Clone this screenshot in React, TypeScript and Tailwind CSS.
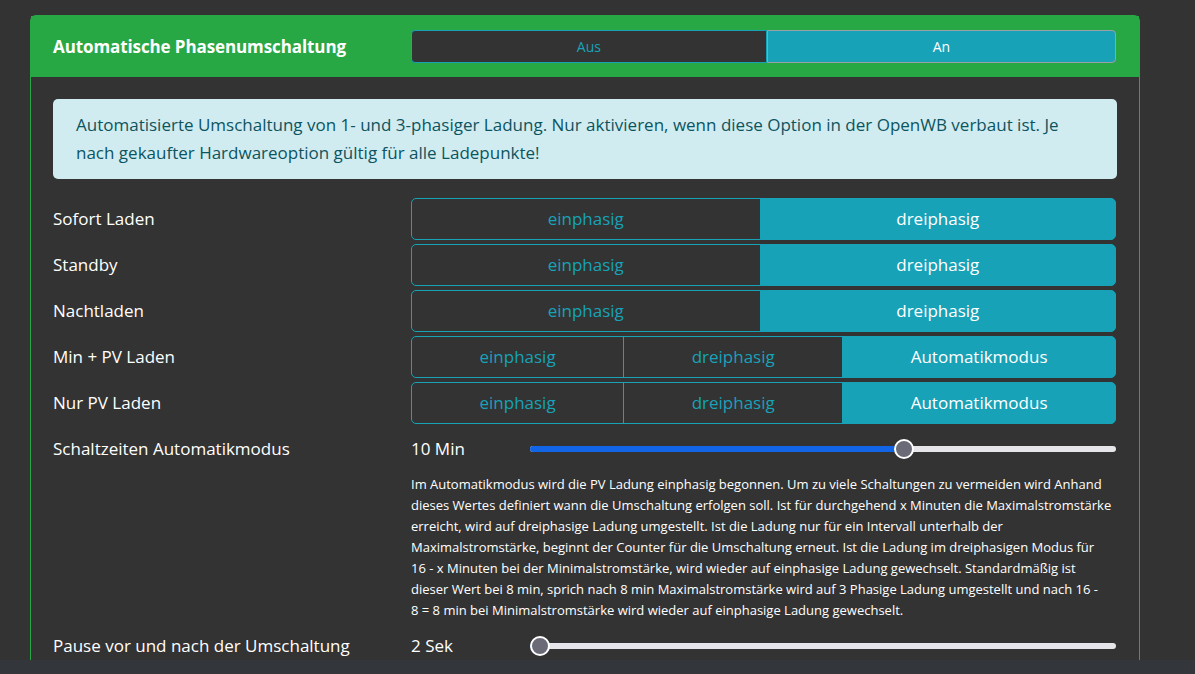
import React from "react";

type Opt = { label: string; active?: boolean };

function ButtonGroup({ opts }: { opts: Opt[] }) {
  return (
    <div className="flex h-[42px] w-[705px]">
      {opts.map((o, i) => {
        const first = i === 0;
        const last = i === opts.length - 1;
        return (
          <div
            key={i}
            className={
              "flex flex-auto items-center justify-center border border-[#17a2b8] text-[17px] " +
              (first ? "rounded-l-[5px] " : "-ml-px ") +
              (last ? "rounded-r-[5px] " : "") +
              (o.active ? "bg-[#17a2b8] text-white" : "bg-[#333333] text-[#17a2b8]")
            }
          >
            {o.label}
          </div>
        );
      })}
    </div>
  );
}

function Slider({ frac }: { frac: number }) {
  const left = 10 + frac * 566;
  return (
    <div className="relative h-[20px] w-[586px]">
      <div className="absolute left-0 right-0 top-[7px] h-[6px] rounded-full bg-[#e6e6ea]" />
      <div
        className="absolute left-0 top-[7px] h-[6px] rounded-full bg-[#1165e6]"
        style={{ width: left }}
      />
      <div
        className="absolute top-0 h-[20px] w-[20px] rounded-full border-2 border-white bg-[#6b6b78]"
        style={{ left: left - 10 }}
      />
    </div>
  );
}

const rows: { label: string; opts: Opt[] }[] = [
  { label: "Sofort Laden", opts: [{ label: "einphasig" }, { label: "dreiphasig", active: true }] },
  { label: "Standby", opts: [{ label: "einphasig" }, { label: "dreiphasig", active: true }] },
  { label: "Nachtladen", opts: [{ label: "einphasig" }, { label: "dreiphasig", active: true }] },
  {
    label: "Min + PV Laden",
    opts: [{ label: "einphasig" }, { label: "dreiphasig" }, { label: "Automatikmodus", active: true }],
  },
  {
    label: "Nur PV Laden",
    opts: [{ label: "einphasig" }, { label: "dreiphasig" }, { label: "Automatikmodus", active: true }],
  },
];

const desc = [
  "Im Automatikmodus wird die PV Ladung einphasig begonnen. Um zu viele Schaltungen zu vermeiden wird Anhand",
  "dieses Wertes definiert wann die Umschaltung erfolgen soll. Ist für durchgehend x Minuten die Maximalstromstärke",
  "erreicht, wird auf dreiphasige Ladung umgestellt. Ist die Ladung nur für ein Intervall unterhalb der",
  "Maximalstromstärke, beginnt der Counter für die Umschaltung erneut. Ist die Ladung im dreiphasigen Modus für",
  "16 - x Minuten bei der Minimalstromstärke, wird wieder auf einphasige Ladung gewechselt. Standardmäßig ist",
  "dieser Wert bei 8 min, sprich nach 8 min Maximalstromstärke wird auf 3 Phasige Ladung umgestellt und nach 16 -",
  "8 = 8 min bei Minimalstromstärke wird wieder auf einphasige Ladung gewechselt.",
];

export default function App() {
  return (
    <div
      className="relative h-[674px] w-[1195px] overflow-hidden bg-[#333333] text-white"
      style={{ fontFamily: '"Open Sans", "Noto Sans", sans-serif' }}
    >
      <div className="ml-[30px] mt-[15px] w-[1110px] rounded-t-[6px] border border-[#28a745]">
        {/* header */}
        <div className="flex h-[61px] items-center bg-[#28a745] pl-[22px]">
          <div className="w-[358px] text-[17px] font-bold tracking-[-0.1px]">Automatische Phasenumschaltung</div>
          <div className="flex h-[33px] w-[705px]">
            <div className="flex flex-auto items-center justify-center rounded-l-[4px] border border-[#17a2b8] bg-[#333333] text-[14px] text-[#17a2b8]">
              Aus
            </div>
            <div className="flex flex-auto items-center justify-center rounded-r-[4px] border border-[#9aa0a6] bg-[#17a2b8] text-[14px] text-white">
              An
            </div>
          </div>
        </div>

        {/* body */}
        <div className="px-[22px] pt-[22px] pb-[20px]">
          <div className="h-[80px] rounded-[5px] bg-[#d1ecf1] px-[23px] py-[12px] text-[17px] leading-[28px] text-[#0c5460]">
            <div className="whitespace-nowrap">
              Automatisierte Umschaltung von 1- und 3-phasiger Ladung. Nur aktivieren, wenn diese Option in der OpenWB verbaut ist. Je
            </div>
            <div className="whitespace-nowrap">nach gekaufter Hardwareoption gültig für alle Ladepunkte!</div>
          </div>

          <div className="mt-[19px] flex flex-col gap-[4px]">
            {rows.map((r) => (
              <div key={r.label} className="flex h-[42px] items-center">
                <div className="w-[358px] text-[17px]">{r.label}</div>
                <ButtonGroup opts={r.opts} />
              </div>
            ))}

            <div className="flex h-[42px] items-center">
              <div className="w-[358px] text-[17px]">Schaltzeiten Automatikmodus</div>
              <div className="w-[119px] text-[17px]">10 Min</div>
              <Slider frac={9 / 14} />
            </div>
            <div className="ml-[358px] text-[13px] leading-[21px]">
              {desc.map((l) => (
                <div key={l} className="whitespace-nowrap">
                  {l}
                </div>
              ))}
            </div>
            <div className="flex h-[42px] items-center">
              <div className="w-[358px] text-[17px]">Pause vor und nach der Umschaltung</div>
              <div className="w-[119px] text-[17px]">2 Sek</div>
              <Slider frac={0} />
            </div>
          </div>
        </div>
      </div>
      <div className="absolute bottom-0 left-0 h-[14px] w-full bg-[#33363b]" />
    </div>
  );
}
